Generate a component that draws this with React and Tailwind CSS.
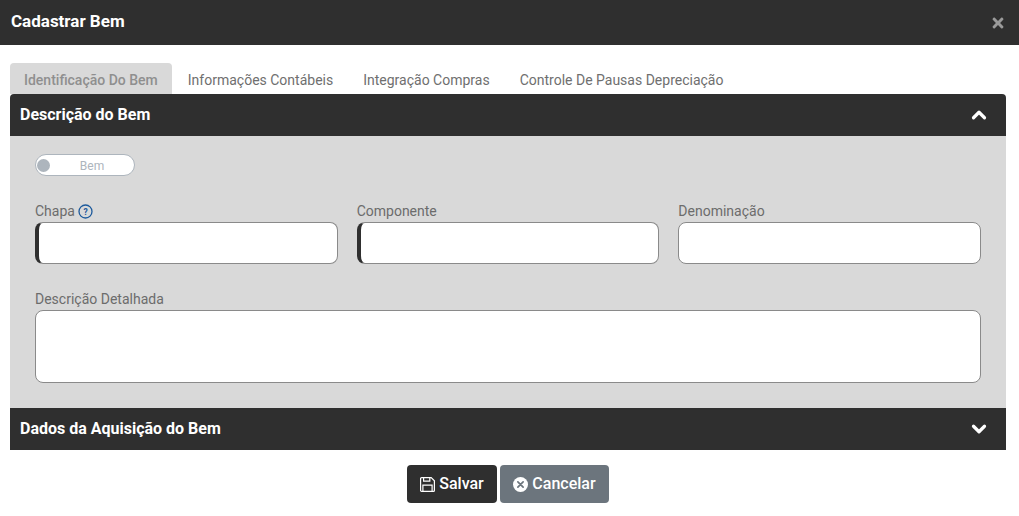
import React from 'react';
import { ChevronUp, ChevronDown } from 'lucide-react';
import { FaTimes } from 'react-icons/fa';

const tabs = ['Informações Contábeis', 'Integração Compras', 'Controle De Pausas Depreciação'];

function SectionHeader({ title, open, rounded }) {
  return (
    <div className={`flex h-[42px] items-center justify-between bg-[#2f2f2f] pl-[10px] pr-[16px] ${rounded ? 'rounded-t-[4px]' : ''}`}>
      <span className="text-base leading-6 font-bold text-white">{title}</span>
      {open ? (
        <ChevronUp className="h-[22px] w-[22px] text-white" strokeWidth={3.5} />
      ) : (
        <ChevronDown className="h-[22px] w-[22px] text-white" strokeWidth={3.5} />
      )}
    </div>
  );
}

function HelpIcon() {
  return (
    <svg viewBox="0 0 15 15" className="mt-[1px] h-[15px] w-[15px]">
      <circle cx="7.5" cy="7.5" r="6.5" fill="none" stroke="#1d5a9c" strokeWidth="1.3" />
      <text x="7.5" y="10.5" textAnchor="middle" fontSize="8.5" fontWeight="700" fill="#1d5a9c">?</text>
    </svg>
  );
}

function SaveIcon() {
  return (
    <svg viewBox="0 0 15 15" className="h-[15px] w-[15px]" fill="none" stroke="#fff" strokeWidth="1.2">
      <path d="M1.6.6h9.6l3.2 3.2v9.6a1 1 0 0 1-1 1H1.6a1 1 0 0 1-1-1V1.6a1 1 0 0 1 1-1z" />
      <path d="M3.6.6v3.6h6.2V.6" />
      <path d="M2.9 14.4V8.2h9.2v6.2" />
    </svg>
  );
}

function Field({ label, required, help }) {
  return (
    <div className="flex flex-col">
      <label className="flex h-[22px] items-start gap-[3px] pt-[3px] text-sm leading-[17px] text-[#6c6c6c]">
        {label}
        {help && <HelpIcon />}
      </label>
      <input
        className={`h-[42px] w-full rounded-[8px] border border-[#8a8a8a] bg-white outline-none ${required ? 'border-l-[4px] border-l-[#2f2f2f]' : ''}`}
      />
    </div>
  );
}

export default function App() {
  return (
    <div className="h-[516px] w-[1019px] overflow-hidden bg-white font-['Roboto',sans-serif]">
      <header className="flex h-[45px] items-center justify-between bg-[#2f2f2f] pl-[11px] pr-[13px]">
        <h1 className="-mt-[2px] text-[17px] font-bold text-white">Cadastrar Bem</h1>
        <FaTimes className="mt-[1px] text-base text-[#9a9a9a]" />
      </header>

      <div className="px-[10px] pt-[18px] pr-[13px]">
        <nav className="flex h-[31px] items-stretch text-sm">
          <div className="flex items-center rounded-t-[4px] bg-[#d9d9d9] px-[14px] pt-[2px] font-medium text-[#8f8f8f]">
            Identificação Do Bem
          </div>
          <div className="flex gap-[30px] pl-[16px]">
            {tabs.map((tab) => (
              <div key={tab} className="flex items-center pt-[2px] text-[#6f6f6f]">
                {tab}
              </div>
            ))}
          </div>
        </nav>

        <SectionHeader title="Descrição do Bem" open rounded />
        <section className="h-[272px] bg-[#d9d9d9] px-[25px] pt-[18px]">
          <div className="flex h-[22px] w-[100px] items-center rounded-full border border-[#adb5bd] bg-white pl-[1px]">
            <span className="h-[13px] w-[13px] rounded-full bg-[#adb5bd]" />
            <span className="flex-1 pt-[1px] text-center text-xs text-[#adb5bd]">Bem</span>
          </div>

          <div className="mt-[24px] grid grid-cols-3 gap-x-[19px]">
            <Field label="Chapa" required help />
            <Field label="Componente" required />
            <Field label="Denominação" />
          </div>

          <div className="mt-[24px] flex flex-col">
            <label className="flex h-[22px] items-start pt-[3px] text-sm leading-[17px] text-[#6c6c6c]">Descrição Detalhada</label>
            <textarea className="h-[73px] w-full resize-none rounded-[8px] border border-[#8a8a8a] bg-white outline-none" />
          </div>
        </section>
        <SectionHeader title="Dados da Aquisição do Bem" />

        <div className="mt-[15px] flex justify-center gap-[3px]">
          <button className="flex h-[38px] w-[90px] items-center justify-center gap-[4px] rounded-[4px] bg-[#2f2f2f] text-base font-medium text-white">
            <SaveIcon />
            Salvar
          </button>
          <button className="flex h-[38px] w-[109px] items-center justify-center gap-[4px] rounded-[4px] bg-[#6c757d] text-base font-medium text-white">
            <svg viewBox="0 0 16 16" className="h-[15px] w-[15px]">
              <circle cx="8" cy="8" r="8" fill="#fff" />
              <path d="M5.2 5.2l5.6 5.6M10.8 5.2l-5.6 5.6" stroke="#6c757d" strokeWidth="1.8" strokeLinecap="round" />
            </svg>
            Cancelar
          </button>
        </div>
      </div>
    </div>
  );
}
